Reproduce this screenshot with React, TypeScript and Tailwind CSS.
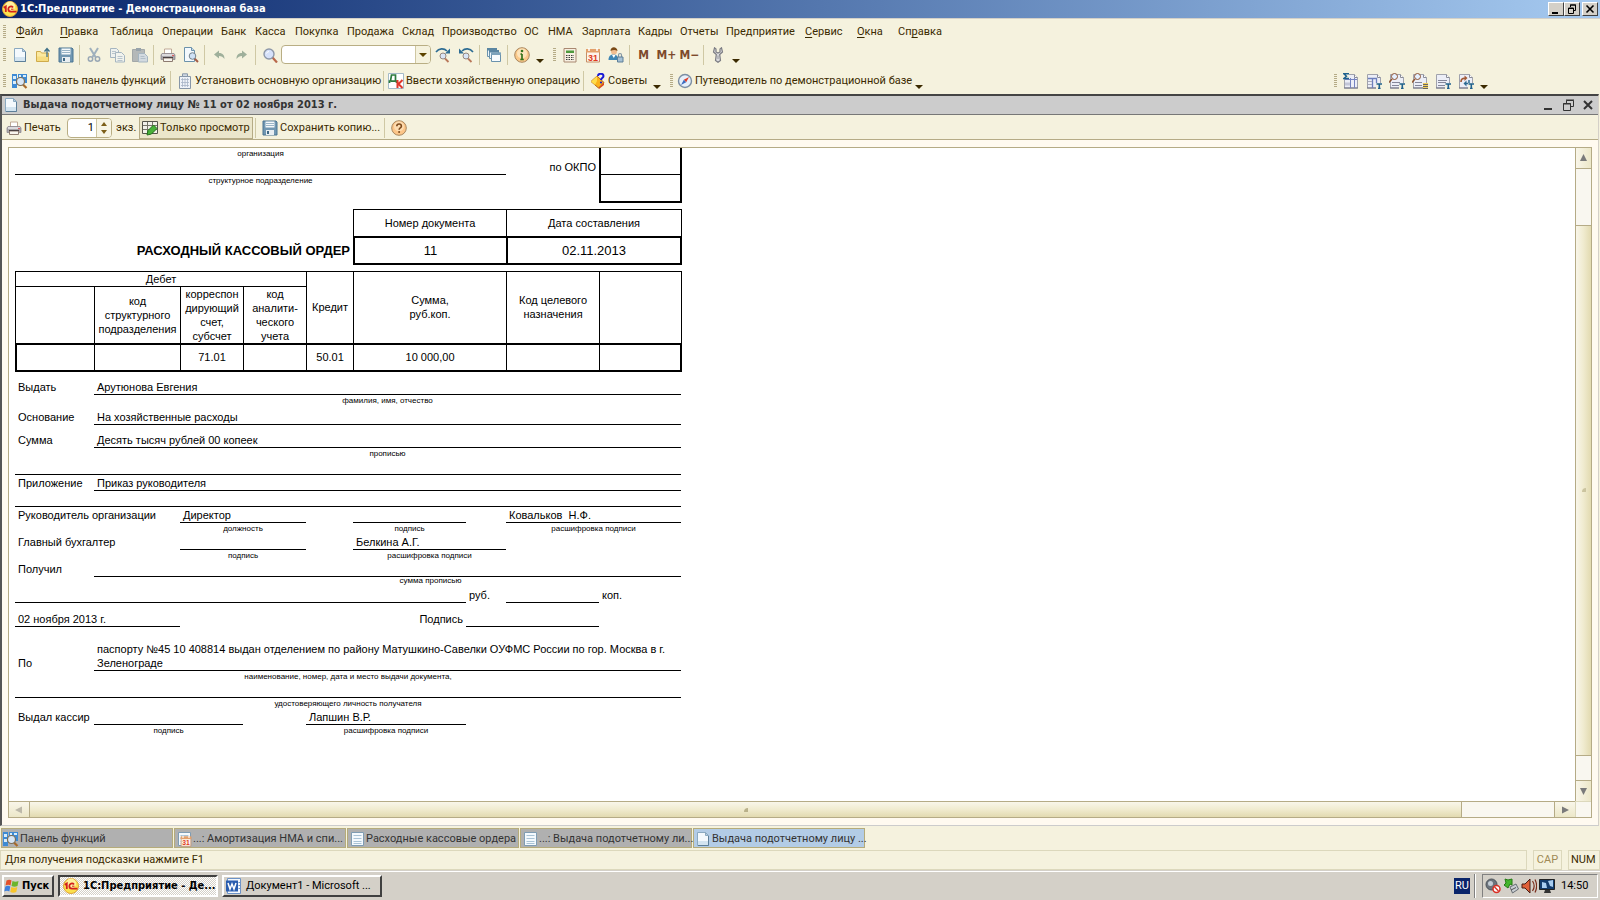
import type { ReactNode } from "react";

const MENU = [
  { pre: "", key: "Ф", post: "айл", width: "w-[44px]" },
  { pre: "", key: "П", post: "равка", width: "w-[50px]" },
  { pre: "Таблица", width: "w-[52px]" },
  { pre: "Операции", width: "w-[59px]" },
  { pre: "Банк", width: "w-[34px]" },
  { pre: "Касса", width: "w-[40px]" },
  { pre: "Покупка", width: "w-[52px]" },
  { pre: "Продажа", width: "w-[55px]" },
  { pre: "Склад", width: "w-[40px]" },
  { pre: "Производство", width: "w-[82px]" },
  { pre: "ОС", width: "w-[24px]" },
  { pre: "НМА", width: "w-[34px]" },
  { pre: "Зарплата", width: "w-[56px]" },
  { pre: "Кадры", width: "w-[42px]" },
  { pre: "Отчеты", width: "w-[46px]" },
  { pre: "Предприятие", width: "w-[79px]" },
  { pre: "", key: "С", post: "ервис", width: "w-[52px]" },
  { pre: "", key: "О", post: "кна", width: "w-[41px]" },
  { pre: "Сп", key: "р", post: "авка", width: "w-[52px]" },
];

function Svg({ children, className = "h-4 w-4" }: { children: ReactNode; className?: string }) {
  return (
    <svg viewBox="0 0 16 16" className={`shrink-0 ${className}`} aria-hidden="true">
      {children}
    </svg>
  );
}

const PageIcon = () => (
  <Svg>
    <path d="M2.5 1.5h8l3 3v10h-11z" fill="#f4f9fd" stroke="#8ba9c0" />
    <path d="M3 10h10v4H3z" fill="#d3e4f0" />
    <path d="M10.5 1.5v3h3z" fill="#b9d0e0" stroke="#8ba9c0" />
    <path d="M13.5 5v9.5H3" fill="none" stroke="#5d7f99" />
  </Svg>
);

const ListIcon = () => (
  <Svg>
    <path d="M2.5 1.5h12v13h-12z" fill="#f4f9fd" stroke="#7f9cb3" />
    <path d="M4.5 4.5h8M4.5 7.5h8M4.5 10.5h8M4.5 12.5h8" stroke="#a9c3d6" />
  </Svg>
);

const OpenIcon = () => (
  <Svg>
    <path d="M1.5 4.5h4l1 1.500h7v8.500h-12z" fill="#fbe9a0" stroke="#cfab4c" />
    <path d="M2 9.500h11V14H2z" fill="#f6dc80" />
    <path d="M12 10V2M9.500 4.500 12 1.500l2.500 3" fill="none" stroke="#3f7088" strokeWidth="1.300" />
  </Svg>
);

const SaveIcon = () => (
  <Svg>
    <path d="M1 1h13l1 1v13H1z" fill="#7197b2" stroke="#4b7592" />
    <path d="M3.500 1.500h9v6h-9z" fill="#f4f8fa" />
    <path d="M4 3.500h8M4 5.500h8" stroke="#9ab5c7" />
    <path d="M4 10h8v5H4z" fill="#e8eef2" />
    <path d="M5 11h2v3H5z" fill="#3f6884" />
  </Svg>
);

const CutIcon = () => (
  <Svg>
    <path d="M4 1l5.500 9M12 1L6.500 10" stroke="#9fb0bd" strokeWidth="2" fill="none" />
    <circle cx="4.500" cy="12" r="2.200" fill="none" stroke="#9aa8b5" strokeWidth="1.500" />
    <circle cx="11.500" cy="12" r="2.200" fill="none" stroke="#9aa8b5" strokeWidth="1.500" />
  </Svg>
);

const CopyIcon = () => (
  <Svg>
    <path d="M1.500 1.500h6l2 2v7h-8z" fill="#eef1ee" stroke="#a5b5c0" />
    <path d="M3 4.500h4M3 6.500h4" stroke="#b8c4cc" />
    <path d="M6.500 5.500h6l3 3v6.500h-9z" fill="#f1f3ee" stroke="#a5b5c0" />
    <path d="M8.500 9.500h5M8.500 11.500h5M8.500 13.500h5" stroke="#b8c4cc" />
  </Svg>
);

const PasteIcon = () => (
  <Svg>
    <path d="M.5 2.500h12v12H.5z" fill="#b4b8b8" stroke="#a3a8a8" />
    <path d="M4 1h5v3H4z" fill="#98a3ab" />
    <path d="M6.500 6.500h6l3 3v5.500h-9z" fill="#d3dae0" stroke="#a5b5c0" />
    <path d="M8.500 9.500h4M8.500 11.500h5" stroke="#b1bec8" />
  </Svg>
);

const PrintIcon = () => (
  <Svg>
    <path d="M4.500 2h7v5h-7z" fill="#fff" stroke="#c0a996" />
    <path d="M2 6.500h12l1 1.500v4.500H1V8z" fill="#aaa7ab" stroke="#85808a" strokeWidth=".7" />
    <path d="M2 7h12v2H2z" fill="#dcdadd" />
    <path d="M3.500 11h9v3.500h-9z" fill="#f7f4ee" stroke="#8d7b70" />
    <path d="M3 10.500h10" stroke="#493f42" />
    <circle cx="13" cy="8.500" r=".8" fill="#d33" />
  </Svg>
);

const PreviewIcon = () => (
  <Svg>
    <path d="M1.500.5h7l3 3v11h-10z" fill="#f4f9fd" stroke="#6c92ab" />
    <path d="M8.500.5v3h3" fill="#c9dcea" stroke="#6c92ab" />
    <path d="M11.500 11.500l3.500 3.500" stroke="#a35c46" strokeWidth="2" />
    <circle cx="9.500" cy="9" r="3.300" fill="#cfe1f5" stroke="#75838c" />
  </Svg>
);

const UndoIcon = () => (
  <Svg>
    <path d="M3 7.500l5-4v2.500c4 0 5.500 2.500 5.500 6-1.500-2-3-3-5.500-3v2.500z" fill="#9fb09b" />
  </Svg>
);

const RedoIcon = () => (
  <Svg>
    <path d="M13 7.500l-5-4v2.500c-4 0-5.500 2.500-5.500 6 1.500-2 3-3 5.500-3v2.500z" fill="#9fb09b" />
  </Svg>
);

const SearchIcon = () => (
  <Svg>
    <path d="M10.500 10.500l4.500 5" stroke="#b9684b" strokeWidth="2.200" />
    <circle cx="7" cy="7" r="5" fill="#d6e1fa" stroke="#8d97a8" strokeWidth="1.400" />
    <path d="M4.500 6.500a3 3 0 0 1 2.500-2" stroke="#fff" fill="none" />
  </Svg>
);

const FindNextIcon = () => (
  <Svg>
    <path d="M1 5c3-4 8-4 11-1" fill="none" stroke="#2d6c93" strokeWidth="1.600" />
    <path d="M15 1.500v5h-5z" fill="#2d6c93" />
    <path d="M10 11.500l3.500 3.500" stroke="#b9785b" strokeWidth="1.800" />
    <circle cx="8" cy="9" r="3" fill="#d9e5f7" stroke="#95877f" />
  </Svg>
);

const FindPrevIcon = () => (
  <Svg>
    <path d="M15 5C12 1 7 1 4 4" fill="none" stroke="#2d6c93" strokeWidth="1.600" />
    <path d="M1 1.500v5h5z" fill="#2d6c93" />
    <path d="M10 11.500l3.500 3.500" stroke="#b9785b" strokeWidth="1.800" />
    <circle cx="8" cy="9" r="3" fill="#d9e5f7" stroke="#95877f" />
  </Svg>
);

const WindowsIcon = () => (
  <Svg>
    <path d="M1.500 1.500h9v8h-9z" fill="#eef6fb" stroke="#6b93ad" />
    <path d="M1 1h10v2.500H1z" fill="#5b86a2" />
    <path d="M3.500 3.500h9v8h-9z" fill="#eef6fb" stroke="#6b93ad" />
    <path d="M3 3h10v2.500H3z" fill="#5b86a2" />
    <path d="M5.500 6h9v8.500h-9z" fill="#f8fcfe" stroke="#6b93ad" />
    <path d="M5 5.500h10V8H5z" fill="#7ca2bb" />
  </Svg>
);

const InfoIcon = () => (
  <Svg>
    <circle cx="8" cy="8" r="7.300" fill="#fbc98a" stroke="#a8875f" />
    <circle cx="8" cy="6.500" r="5" fill="#fde4bb" />
    <path d="M8 7v5.500M6.500 7.200H8M6.300 12.500h3.500" stroke="#35731c" strokeWidth="1.700" fill="none" />
    <circle cx="8" cy="4" r="1.300" fill="#35731c" />
  </Svg>
);

const CalcIcon = () => (
  <Svg>
    <path d="M2 1.500h12v13.500H2z" fill="#f7efe1" stroke="#a98871" />
    <path d="M4 3.500h8v2.500H4z" fill="#4f9a3d" />
    <path d="M4 8.500h8M4 10.500h8M4 12.500h8" stroke="#3c3c3c" strokeWidth="1.200" strokeDasharray="1.500 1" />
  </Svg>
);

const CalendarIcon = ({ className }: { className?: string }) => (
  <Svg className={className}>
    <path d="M1.500 2.500h13v12.500h-13z" fill="#fdf3ea" stroke="#c58e67" />
    <path d="M1 2h14v3.500H1z" fill="#e3a06b" />
    <path d="M4 1v3M12 1v3" stroke="#fff" strokeWidth="1.500" />
    <text x="8" y="13.800" textAnchor="middle" className="fill-[#e03a1c] font-['Liberation_Sans'] text-[9px] font-bold">31</text>
  </Svg>
);

const UserLockIcon = () => (
  <Svg>
    <path d="M.5 13c0-4 2-5.500 5-5.500s4.500 1.500 4.500 5.500z" fill="#3e86b4" />
    <path d="M4 8l1.800 3 1.700-3z" fill="#fff" />
    <circle cx="6" cy="4.500" r="3" fill="#f0bd8f" />
    <path d="M2.500 4c0-5 6.500-5 7 0-2-1.200-4-1.500-7 0z" fill="#7a4a16" />
    <path d="M10.500 10V8c0-2 3-2 3 0v2" fill="none" stroke="#8195a3" strokeWidth="1.200" />
    <path d="M9.500 10h5.500v5H9.500z" fill="#a5c1d6" stroke="#5e7f97" />
  </Svg>
);

const WrenchIcon = () => (
  <Svg>
    <path d="M4.500.8L3.500 5l2.800 2.500-.8 6L8 15.300l2.500-1.800-.8-6L12.500 5l-1-4.200L10 2v3L8 6 6 5V2z" fill="#dcdcdf" stroke="#7c7d83" strokeWidth="1.200" />
    <path d="M8 8.500v3.500" stroke="#a0a1a6" strokeWidth="1.200" />
  </Svg>
);

const PanelIcon = () => (
  <Svg>
    <path d="M0 1h5v14H0zM6 1h9v9H6z" fill="#3d8ad4" />
    <path d="M1 3h3v3H1zM1 8h3v3H1zM7 2h2v2H7zM11 2h3v2h-3z" fill="#d9edfb" />
    <path d="M11 11.500l3.500 3.500" stroke="#a86a2a" strokeWidth="2.200" />
    <circle cx="8.500" cy="8.500" r="4" fill="#d8e7f6" stroke="#7c6b52" strokeWidth="1.200" />
  </Svg>
);

const OrgIcon = () => (
  <Svg>
    <path d="M2.500 3.500h11v12h-11z" fill="#eef2f8" stroke="#8796a8" />
    <path d="M5.500.8h5v2.700h-5z" fill="#cfd8e4" stroke="#8796a8" />
    <path d="M4 6.500h8M4 9.500h8M4 12.500h8M5.500 5v9M8 5v9M10.500 5v9" stroke="#a7b4c6" strokeWidth=".8" />
  </Svg>
);

const DebitCreditIcon = () => (
  <Svg>
    <path d="M.5.5h15v15H.5z" fill="#fff" stroke="#a5bac8" />
    <path d="M1.500 10V8h1l1-6h4v6h1v2M3 8.200h4.500" fill="none" stroke="#2c7a3d" strokeWidth="1.700" />
    <path d="M9.500 7v8M14.500 7l-4 4 4 4" fill="none" stroke="#e0372b" strokeWidth="2" />
  </Svg>
);

const TipsIcon = () => (
  <Svg>
    <path d="M1 8.500L7 3l7 6.500L8.500 15z" fill="#fbb11b" stroke="#b3661a" />
    <path d="M8.500 15L14 9.500V12l-5 4z" fill="#d9461a" />
    <path d="M1 8.500L7 3v5l-2 4z" fill="#ffdc4a" />
    <path d="M8 3c0-3 5.500-3 5.500 0 0 2-2.500 2-2.500 4" fill="none" stroke="#1a1ad6" strokeWidth="2" />
    <circle cx="11" cy="9.500" r="1.100" fill="#1a1ad6" />
  </Svg>
);

const CompassIcon = () => (
  <Svg>
    <circle cx="8" cy="8" r="6.500" fill="#e6effa" stroke="#7c8ea3" strokeWidth="1.400" />
    <path d="M12 4L9.200 9.200 6.800 6.800z" fill="#e0402c" />
    <path d="M4 12l2.800-5.200 2.400 2.400z" fill="#3d6dc0" />
  </Svg>
);

const EditTableIcon = () => (
  <Svg>
    <path d="M.5 1.500h15v12H.5z" fill="#f2f1ea" stroke="#55544c" />
    <path d="M1 5.500h14M1 9.500h14M5.500 2v11M10.500 2v11" stroke="#77756a" />
    <path d="M5 15l1-4.500L11.500 5 15 8.500 9.500 14z" fill="#49b13a" stroke="#23701c" />
  </Svg>
);

const HelpIcon = () => (
  <Svg>
    <circle cx="8" cy="8" r="7.300" fill="#fcc588" stroke="#a8875f" />
    <circle cx="8" cy="6.500" r="5" fill="#fddcb0" />
    <path d="M5.800 6.200c0-3 4.600-3 4.600 0 0 1.700-2.300 1.700-2.300 3.500" fill="none" stroke="#7c4a1c" strokeWidth="1.600" />
    <circle cx="8.100" cy="12" r="1" fill="#7c4a1c" />
  </Svg>
);

function SheetBase() {
  return (
    <>
      <path d="M1.500 1.500h10l3 3v10.500h-13z" fill="#eceef7" stroke="#a0a2ac" />
      <path d="M11.500 1.500v3h3" fill="#fff" stroke="#8a8c97" />
      <path d="M1 15h14" stroke="#6d6f82" />
    </>
  );
}

const TMark = () => (
  <>
    <path d="M10 10h6v6h-6z" fill="#f5f2de" />
    <path d="M10.500 11h5.500M13.300 10.500v5M12 15.500h2.600" stroke="#1f618e" strokeWidth="1.600" fill="none" />
  </>
);

const SumIcon = () => (
  <Svg>
    <SheetBase />
    <path d="M2 9.500h5v3H2z" fill="#c3c6d8" />
    <path d="M2 6.500h12M7.500 5v10M11.500 5v10" stroke="#7583c0" />
    <path d="M0 0h6v6H0z" fill="#f5f2de" />
    <path d="M6 .8H.8L3.500 3.200.8 5.500H6" fill="none" stroke="#1f618e" strokeWidth="1.400" />
  </Svg>
);
const TableTIcon = () => (
  <Svg>
    <SheetBase />
    <path d="M2 5.500h9M6.500 5v10M10.500 5v5" stroke="#6d7fbd" strokeWidth="1.300" />
    <path d="M2 8.500h4M2 11.500h4" stroke="#a9acbc" />
    <TMark />
  </Svg>
);
const LensTIcon = () => (
  <Svg>
    <SheetBase />
    <path d="M3 9.500h8M3 12.500h7" stroke="#85879a" />
    <path d="M3 6L0 9.500" stroke="#8d5333" strokeWidth="1.500" />
    <circle cx="5.500" cy="3.500" r="3" fill="#e4efff" stroke="#8d5333" />
    <TMark />
  </Svg>
);
const LensListIcon = () => (
  <Svg>
    <SheetBase />
    <path d="M3 9.500h7M3 12.500h7" stroke="#85879a" />
    <path d="M3 6L0 9.500" stroke="#8d5333" strokeWidth="1.500" />
    <circle cx="5.500" cy="3.500" r="3" fill="#e4efff" stroke="#8d5333" />
    <path d="M11 10h5v6h-5z" fill="#f3cf58" />
    <path d="M11 11.500h5M11 13.500h5M11 15.500h5" stroke="#666" />
  </Svg>
);
const TextTIcon = () => (
  <Svg>
    <SheetBase />
    <path d="M3 7.500h9M3 9.500h8M3 12.500h7" stroke="#85879a" />
    <TMark />
  </Svg>
);
const ExchangeIcon = () => (
  <Svg>
    <SheetBase />
    <path d="M3 9c0-3 2-4 4-3.500" fill="none" stroke="#a15a36" strokeWidth="1.700" />
    <path d="M6.500 2.500L9.500 5l-3 3z" fill="#a15a36" />
    <path d="M7 10.500h4V7" fill="none" stroke="#2d6b92" strokeWidth="1.500" />
    <path d="M8.500 7.500L5.500 10.500l3 3z" fill="#2d6b92" />
    <TMark />
  </Svg>
);

const OneCIcon = () => (
  <Svg>
    <circle cx="8" cy="8" r="7.500" fill="#fbe14d" stroke="#e0a43a" />
    <circle cx="8" cy="5.500" r="5" fill="#fff2a0" />
    <path d="M1.800 6.800l2-1.300V11M11 6.500C9.500 4.500 6.300 5.500 6.300 8c0 1.800 1.200 2.600 2.700 2.600h5.500" fill="none" stroke="#d3201c" strokeWidth="1.800" />
    <path d="M9 8.200h2.500" stroke="#d3201c" />
  </Svg>
);

const Grip = () => <span className="ml-[3px] mr-0.5 h-3.5 w-[3px] shrink-0 bg-[repeating-linear-gradient(to_bottom,#b5ab86_0_1px,transparent_1px_2px)]" />;
const Sep = () => <span className="mx-0.5 h-5 w-px shrink-0 bg-[#cfc8a4]" />;
const More = () => (
  <button type="button" aria-label="Ещё" className="flex h-5 w-[13px] shrink-0 items-end justify-center pb-0.5">
    <svg viewBox="0 0 8 4" className="h-1 w-2"><path d="M0 0h8L4 4z" fill="#3b2a00" /></svg>
  </button>
);

function ToolButton({ label, children }: { label: string; children: ReactNode }) {
  return (
    <button type="button" aria-label={label} className="flex h-[22px] w-[23px] shrink-0 items-center justify-center font-['DejaVu_Sans_Condensed',sans-serif] text-[12px] font-bold text-[#7d4a2c]">
      {children}
    </button>
  );
}

function TextButton({ icon, children, className = "" }: { icon: ReactNode; children: ReactNode; className?: string }) {
  return (
    <button type="button" className={`flex h-[22px] shrink-0 items-center gap-0.5 whitespace-nowrap ${className}`}>
      {icon}
      {children}
    </button>
  );
}

const CaptionButton = ({ label, children }: { label: string; children: ReactNode }) => (
  <button type="button" aria-label={label} className="flex h-3.5 w-4 items-center justify-center border border-b-[#404040] border-l-white border-r-[#404040] border-t-white bg-[#d4d0c8]">
    {children}
  </button>
);

function TitleBar() {
  return (
    <header className="flex h-[19px] shrink-0 items-center border-b border-[#d4d0c8] bg-linear-to-r from-[#0a246a] to-[#a6caf0] pl-0.5 pr-0.5 text-white">
      <OneCIcon />
      <h1 className="ml-0.5 flex-1 font-['DejaVu_Sans_Condensed',sans-serif] text-[11px] font-bold">1С:Предприятие - Демонстрационная база</h1>
      <CaptionButton label="Свернуть"><svg viewBox="0 0 12 10" className="h-2.5 w-3"><path d="M2 8h6v2H2z" /></svg></CaptionButton>
      <CaptionButton label="Восстановить"><svg viewBox="0 0 12 10" className="h-2.5 w-3" fill="none" stroke="#000"><path d="M4.500 3V1h5v5.500H8M4 1h6M2.500 4h5v5.500h-5zM2 4.500h6" /></svg></CaptionButton>
      <span className="w-0.5" />
      <CaptionButton label="Закрыть"><svg viewBox="0 0 12 10" className="h-2.5 w-3" fill="none" stroke="#000" strokeWidth="1.600"><path d="M2.500 1.500l7 7M9.500 1.500l-7 7" /></svg></CaptionButton>
    </header>
  );
}

function MenuBar() {
  return (
    <nav className="flex h-6 shrink-0 items-center pt-0.5">
      <Grip />
      <div className="flex pl-2">
        {MENU.map((item) => (
          <button type="button" key={item.pre + item.key} className={`shrink-0 whitespace-nowrap text-left ${item.width}`}>
            {item.pre}
            {item.key && <span className="underline underline-offset-2">{item.key}</span>}
            {item.post}
          </button>
        ))}
      </div>
    </nav>
  );
}

function MainToolbar() {
  return (
    <div className="flex h-[23px] shrink-0 items-center">
      <Grip />
      <ToolButton label="Новый"><PageIcon /></ToolButton>
      <ToolButton label="Открыть"><OpenIcon /></ToolButton>
      <ToolButton label="Сохранить"><SaveIcon /></ToolButton>
      <Sep />
      <ToolButton label="Вырезать"><CutIcon /></ToolButton>
      <ToolButton label="Копировать"><CopyIcon /></ToolButton>
      <ToolButton label="Вставить"><PasteIcon /></ToolButton>
      <Sep />
      <ToolButton label="Печать"><PrintIcon /></ToolButton>
      <ToolButton label="Предварительный просмотр"><PreviewIcon /></ToolButton>
      <Sep />
      <ToolButton label="Отменить"><UndoIcon /></ToolButton>
      <ToolButton label="Вернуть"><RedoIcon /></ToolButton>
      <Sep />
      <ToolButton label="Найти"><SearchIcon /></ToolButton>
      <div className="flex h-[19px] w-[150px] shrink-0 overflow-hidden rounded border border-[#b9ae84] bg-white">
        <input type="text" aria-label="Поиск" className="min-w-0 flex-1 px-1 outline-none" />
        <button type="button" aria-label="Список поиска" className="flex w-[15px] items-center justify-center border-l border-[#cfc7a2] bg-[#f5f2de]">
          <svg viewBox="0 0 8 4" className="h-1 w-2"><path d="M0 0h8L4 4z" fill="#5c4300" /></svg>
        </button>
      </div>
      <ToolButton label="Найти следующий"><FindNextIcon /></ToolButton>
      <ToolButton label="Найти предыдущий"><FindPrevIcon /></ToolButton>
      <Sep />
      <ToolButton label="Окна"><WindowsIcon /></ToolButton>
      <Sep />
      <ToolButton label="Справка"><InfoIcon /></ToolButton>
      <More />
      <span className="w-1" />
      <Grip />
      <ToolButton label="Калькулятор"><CalcIcon /></ToolButton>
      <ToolButton label="Календарь"><CalendarIcon /></ToolButton>
      <ToolButton label="Пользователи"><UserLockIcon /></ToolButton>
      <Sep />
      <ToolButton label="M">M</ToolButton>
      <ToolButton label="M+">M+</ToolButton>
      <ToolButton label="M-">M−</ToolButton>
      <Sep />
      <ToolButton label="Сервис"><WrenchIcon /></ToolButton>
      <More />
    </div>
  );
}

function CommandBar() {
  return (
    <div className="flex h-7 shrink-0 items-center pt-px">
      <Grip />
      <TextButton icon={<PanelIcon />} className="w-[160px] pl-1">Показать панель функций</TextButton>
      <Sep />
      <TextButton icon={<OrgIcon />} className="w-[208px] pl-1">Установить основную организацию</TextButton>
      <Sep />
      <TextButton icon={<DebitCreditIcon />} className="w-[195px] pl-0.5">Ввести хозяйственную операцию</TextButton>
      <Sep />
      <TextButton icon={<TipsIcon />} className="w-[64px] pl-1">Советы</TextButton>
      <More />
      <span className="w-1" />
      <Grip />
      <TextButton icon={<CompassIcon />} className="w-[237px] pl-0.5">Путеводитель по демонстрационной базе</TextButton>
      <More />
      <div className="ml-auto mr-[110px] flex items-center">
        <Grip />
        <ToolButton label="Итоги"><SumIcon /></ToolButton>
        <ToolButton label="Таблица"><TableTIcon /></ToolButton>
        <ToolButton label="Поиск в тексте"><LensTIcon /></ToolButton>
        <ToolButton label="Поиск в списке"><LensListIcon /></ToolButton>
        <ToolButton label="Текст"><TextTIcon /></ToolButton>
        <ToolButton label="Обмен"><ExchangeIcon /></ToolButton>
        <More />
      </div>
    </div>
  );
}

function DocumentHeader() {
  return (
    <>
      <div className="flex h-[19px] shrink-0 items-center border-b border-[#777] bg-[#ccc] pl-px text-[#333]">
        <PageIcon />
        <h2 className="ml-1 flex-1 font-['DejaVu_Sans_Condensed',sans-serif] text-[11px] font-bold">Выдача подотчетному лицу № 11 от 02 ноября 2013 г.</h2>
        <div className="flex items-center gap-2 pr-1">
          <button type="button" aria-label="Свернуть окно"><svg viewBox="0 0 12 12" className="h-3 w-3"><path d="M2 9h8v2H2z" fill="#333" /></svg></button>
          <button type="button" aria-label="Восстановить окно"><svg viewBox="0 0 12 12" className="h-3 w-3" fill="none" stroke="#333"><path d="M4.500 4V1.500h7v6H9M4 1h8M1.500 4.500h7v7h-7zM1 5h8" /></svg></button>
          <button type="button" aria-label="Закрыть окно"><svg viewBox="0 0 12 12" className="h-3 w-3" stroke="#333" strokeWidth="2"><path d="M2 2l8 8M10 2l-8 8" /></svg></button>
        </div>
      </div>
      <div className="flex h-[25px] shrink-0 items-center border-b border-[#b5ab86] pl-1 pt-px">
        <TextButton icon={<PrintIcon />} className="w-[61px]">Печать</TextButton>
        <div className="flex h-5 w-[45px] shrink-0 overflow-hidden rounded border border-[#b9ae84] bg-white">
          <input id="copies" type="text" defaultValue="1" className="min-w-0 flex-1 pr-0.5 text-right text-black outline-none" />
          <div className="flex w-[15px] flex-col items-center justify-center gap-1 border-l border-[#cfc7a2] bg-[#f7f5e6]">
            <button type="button" aria-label="Больше"><svg viewBox="0 0 6 4" className="block h-1 w-1.5"><path d="M0 4h6L3 0z" fill="#7c5f1a" /></svg></button>
            <button type="button" aria-label="Меньше"><svg viewBox="0 0 6 4" className="block h-1 w-1.5"><path d="M0 0h6L3 4z" fill="#7c5f1a" /></svg></button>
          </div>
        </div>
        <label htmlFor="copies" className="w-[27px] shrink-0 pl-1">экз.</label>
        <TextButton icon={<EditTableIcon />} className="w-[114px] border border-[#b5ab86] bg-[#ebe6cb] pl-0.5">Только просмотр</TextButton>
        <Sep />
        <TextButton icon={<SaveIcon />} className="w-[124px] pl-1">Сохранить копию...</TextButton>
        <Sep />
        <ToolButton label="Справка по форме"><HelpIcon /></ToolButton>
      </div>
    </>
  );
}

// One line of the printed form; every row shares the same column tracks
function Row({ height, children }: { height: string; children?: ReactNode }) {
  return (
    <div className={`grid grid-cols-[79px_86px_63px_63px_47px_113px_40px_93px_82px] ${height}`}>{children}</div>
  );
}

function Cell({ col, line, children }: { col: string; line?: boolean; children?: ReactNode }) {
  return (
    <div className={`flex items-end whitespace-nowrap border-b pl-[3px] ${line ? "border-black" : "border-transparent"} ${col}`}>
      {children}
    </div>
  );
}

function Caption({ col, children }: { col: string; children: ReactNode }) {
  return <div className={`text-center text-[8px] leading-[12px] whitespace-nowrap ${col}`}>{children}</div>;
}

function CashOrder() {
  return (
    <article className="w-[667px] shrink-0 font-['Liberation_Sans',Arial,sans-serif] text-[11px] leading-[14px] text-black">
      <div className="flex">
        <div className="w-[491px] text-center text-[8px] leading-[12px]">
          <div className="h-[27px] border-b border-black">организация</div>
          <div className="h-7">структурное подразделение</div>
        </div>
        <div className="flex-1 pr-[3px] pt-3 text-right">по ОКПО</div>
        <div className="w-[83px] border-2 border-t-0 border-black">
          <div className="h-[27px] border-b border-black" />
        </div>
      </div>

      <div className="mt-1.5 flex items-end">
        <h3 className="flex h-[29px] flex-1 items-center justify-end pr-[3px] text-[13px] font-bold">РАСХОДНЫЙ КАССОВЫЙ ОРДЕР</h3>
        <table className="w-[329px] table-fixed border-separate border-spacing-0 text-center">
          <colgroup>
            <col className="w-[153px]" />
            <col />
          </colgroup>
          <thead>
            <tr>
              <th className="h-[27px] border-l border-t border-black p-0 font-normal">Номер документа</th>
              <th className="border-l border-r border-t border-black p-0 font-normal">Дата составления</th>
            </tr>
          </thead>
          <tbody className="text-[13px]">
            <tr>
              <td className="h-[29px] border-y-2 border-l-2 border-black p-0">11</td>
              <td className="border-2 border-black p-0">02.11.2013</td>
            </tr>
          </tbody>
        </table>
      </div>

      <table className="mt-1.5 w-full table-fixed border-separate border-spacing-0 text-center">
        <colgroup>
          <col className="w-[79px]" />
          <col className="w-[86px]" />
          <col className="w-[63px]" />
          <col className="w-[63px]" />
          <col className="w-[47px]" />
          <col className="w-[153px]" />
          <col className="w-[93px]" />
          <col />
        </colgroup>
        <thead>
          <tr>
            <th colSpan={4} className="h-[15px] border-l border-t border-black p-0 font-normal">Дебет</th>
            <th rowSpan={2} className="border-l border-t border-black p-0 pb-0.5 font-normal">Кредит</th>
            <th rowSpan={2} className="border-l border-t border-black p-0 pb-0.5 font-normal">Сумма,<br />руб.коп.</th>
            <th rowSpan={2} className="border-l border-t border-black p-0 pb-0.5 font-normal">Код целевого<br />назначения</th>
            <th rowSpan={2} className="border-x border-t border-black p-0" />
          </tr>
          <tr>
            <th className="h-[57px] border-l border-t border-black p-0" />
            <th className="border-l border-t border-black p-0 font-normal">код<br />структурного<br />подразделения</th>
            <th className="border-l border-t border-black p-0 font-normal">корреспон<br />дирующий<br />счет,<br />субсчет</th>
            <th className="border-l border-t border-black p-0 font-normal">код<br />аналити-<br />ческого<br />учета</th>
          </tr>
        </thead>
        <tbody>
          <tr>
            <td className="h-[29px] border-y-2 border-l-2 border-black p-0" />
            <td className="border-y-2 border-l border-black p-0" />
            <td className="border-y-2 border-l border-black p-0 pb-0.5">71.01</td>
            <td className="border-y-2 border-l border-black p-0" />
            <td className="border-y-2 border-l border-black p-0 pb-0.5">50.01</td>
            <td className="border-y-2 border-l border-black p-0 pb-0.5">10 000,00</td>
            <td className="border-y-2 border-l border-black p-0" />
            <td className="border-y-2 border-l border-r-2 border-black p-0" />
          </tr>
        </tbody>
      </table>

      <Row height="h-[23px]">
        <Cell col="col-span-1">Выдать</Cell>
        <Cell col="col-span-8" line>Арутюнова Евгения</Cell>
      </Row>
      <Row height="h-3"><Caption col="col-start-2 col-span-8">фамилия, имя, отчество</Caption></Row>
      <Row height="h-[18px]">
        <Cell col="col-span-1">Основание</Cell>
        <Cell col="col-span-8" line>На хозяйственные расходы</Cell>
      </Row>
      <Row height="h-[23px]">
        <Cell col="col-span-1">Сумма</Cell>
        <Cell col="col-span-8" line>Десять тысяч рублей 00 копеек</Cell>
      </Row>
      <Row height="h-3"><Caption col="col-start-2 col-span-8">прописью</Caption></Row>
      <Row height="h-[15px]"><Cell col="col-span-9" line /></Row>
      <Row height="h-4">
        <Cell col="col-span-1">Приложение</Cell>
        <Cell col="col-span-8" line>Приказ руководителя</Cell>
      </Row>
      <Row height="h-4"><Cell col="col-span-9" line /></Row>
      <Row height="h-4">
        <Cell col="col-span-2">Руководитель организации</Cell>
        <Cell col="col-span-2" line>Директор</Cell>
        <Cell col="col-start-6" line />
        <Cell col="col-start-8 col-span-2" line><span className="whitespace-pre">Ковальков  Н.Ф.</span></Cell>
      </Row>
      <Row height="h-3">
        <Caption col="col-start-3 col-span-2">должность</Caption>
        <Caption col="col-start-6">подпись</Caption>
        <Caption col="col-start-8 col-span-2">расшифровка подписи</Caption>
      </Row>
      <Row height="h-[15px]">
        <Cell col="col-span-2">Главный бухгалтер</Cell>
        <Cell col="col-span-2" line />
        <Cell col="col-start-6 col-span-2" line>Белкина А.Г.</Cell>
      </Row>
      <Row height="h-3">
        <Caption col="col-start-3 col-span-2">подпись</Caption>
        <Caption col="col-start-6 col-span-2">расшифровка подписи</Caption>
      </Row>
      <Row height="h-[13px]">
        <Cell col="col-span-1">Получил</Cell>
        <Cell col="col-span-8" line />
      </Row>
      <Row height="h-[13px]"><Caption col="col-start-3 col-span-7">сумма прописью</Caption></Row>
      <Row height="h-[15px]">
        <Cell col="col-span-6" line />
        <Cell col="col-span-1">руб.</Cell>
        <Cell col="col-span-1" line />
        <Cell col="col-span-1">коп.</Cell>
      </Row>
      <Row height="h-6">
        <Cell col="col-span-2" line>02 ноября 2013 г.</Cell>
        <Cell col="col-start-6 justify-end pr-[3px]">Подпись</Cell>
        <Cell col="col-span-2" line />
      </Row>
      <Row height="h-11">
        <Cell col="col-span-1">По</Cell>
        <Cell col="col-span-8" line>
          <span>паспорту №45 10 408814 выдан отделением по району Матушкино-Савелки ОУФМС России по гор. Москва в г.<br />Зеленограде</span>
        </Cell>
      </Row>
      <Row height="h-3"><Caption col="col-span-9">наименование, номер, дата и место выдачи документа,</Caption></Row>
      <Row height="h-[15px]"><Cell col="col-span-9" line /></Row>
      <Row height="h-3"><Caption col="col-span-9">удостоверяющего личность получателя</Caption></Row>
      <Row height="h-[15px]">
        <Cell col="col-span-1">Выдал кассир</Cell>
        <Cell col="col-span-2" line />
        <Cell col="col-start-5 col-span-2" line>Лапшин В.Р.</Cell>
      </Row>
      <Row height="h-3">
        <Caption col="col-start-2 col-span-2">подпись</Caption>
        <Caption col="col-start-5 col-span-2">расшифровка подписи</Caption>
      </Row>
    </article>
  );
}

const Arrow = ({ d, fill }: { d: string; fill: string }) => (
  <svg viewBox="0 0 8 8" className="h-2 w-2"><path d={d} fill={fill} /></svg>
);

function SheetView() {
  return (
    <div className="min-h-0 flex-1 bg-[#fffaf0] px-1.5 py-[7px]">
      <div className="grid h-full grid-cols-[1fr_16px] grid-rows-[1fr_16px] border border-[#b5ab86]">
        <main className="min-h-0 overflow-hidden bg-white pl-1.5">
          <CashOrder />
        </main>
        <div className="flex flex-col border-l border-[#b5ab86] bg-[#f9f7f0]">
          <button type="button" aria-label="Вверх" className="flex h-[21px] items-center justify-center border-b border-[#b5ab86] bg-linear-to-r from-[#f9f6ea] to-[#ece7c8]">
            <Arrow d="M0 7h7L3.500 0z" fill="#7a7a7a" />
          </button>
          <span className="flex-[56]" />
          <div className="flex flex-[532] items-center justify-center border-y border-[#b5ab86] bg-linear-to-r from-[#f9f6ea] via-[#f0ebcf] to-[#e2dab0]">
            <span className="h-1 w-1 rounded-tl-full bg-[#cbc49f]" />
          </div>
          <span className="flex-[24]" />
          <button type="button" aria-label="Вниз" className="flex h-[21px] items-center justify-center border-t border-[#b5ab86] bg-linear-to-r from-[#f9f6ea] to-[#ece7c8]">
            <Arrow d="M0 1h7L3.500 8z" fill="#7a7a7a" />
          </button>
        </div>
        <div className="flex border-t border-[#b5ab86] bg-[#f9f7f0]">
          <button type="button" aria-label="Влево" className="flex w-[21px] items-center justify-center border-r border-[#b5ab86] bg-linear-to-b from-[#f9f6ea] to-[#ece7c8]">
            <Arrow d="M7 .5v7L0 4z" fill="#bdb9aa" />
          </button>
          <div className="flex flex-[1433] items-center justify-center border-r border-[#b5ab86] bg-linear-to-b from-[#f9f6ea] via-[#f0ebcf] to-[#e2dab0]">
            <span className="h-1 w-1 rounded-tl-full bg-[#b9b18a]" />
          </div>
          <span className="flex-[92]" />
          <button type="button" aria-label="Вправо" className="flex w-[21px] items-center justify-center border-l border-[#b5ab86] bg-linear-to-b from-[#f9f6ea] to-[#ece7c8]">
            <Arrow d="M1 .5v7L8 4z" fill="#7a7a7a" />
          </button>
        </div>
        <div className="border-l border-t border-[#dcd8bc] bg-[#f9f7f0]" />
      </div>
    </div>
  );
}

const AmortIcon = () => (
  <span className="relative h-4 w-4 shrink-0">
    <ListIcon />
    <CalendarIcon className="absolute bottom-0 right-0 h-3 w-3" />
  </span>
);

const TABS = [
  { icon: <PanelIcon />, title: "Панель функций" },
  { icon: <AmortIcon />, title: "...: Амортизация НМА и спи..." },
  { icon: <ListIcon />, title: "Расходные кассовые ордера" },
  { icon: <ListIcon />, title: "...: Выдача подотчетному ли..." },
  { icon: <PageIcon />, title: "Выдача подотчетному лицу ...", active: true },
];

function WindowTabs() {
  return (
    <div className="flex h-[22px] shrink-0 gap-px pl-px">
      {TABS.map((tab) => (
        <button
          type="button"
          key={tab.title}
          className={`flex h-5 w-[172px] items-center whitespace-nowrap border border-[#b5ab7a] pl-px pt-px text-[#333] ${tab.active ? "bg-[#b3cce6]" : "bg-[#b0b0b0]"}`}
        >
          {tab.icon}
          <span className="pl-px">{tab.title}</span>
        </button>
      ))}
    </div>
  );
}

function StatusBar() {
  return (
    <div className="flex h-5 shrink-0 gap-1.5">
      <div className="flex flex-1 items-center border border-[#dcd8bc] pl-1">Для получения подсказки нажмите F1</div>
      <div className="flex w-[29px] items-center justify-center border border-[#dcd8bc] text-[#a08a55]">CAP</div>
      <div className="flex w-8 items-center border border-[#dcd8bc] pl-0.5">NUM</div>
    </div>
  );
}

function Taskbar() {
  return (
    <footer className="flex h-[29px] shrink-0 items-center gap-1 border-t border-white bg-[#d4d0c8] pl-0.5 pr-0.5 text-black">
      <button type="button" className="flex h-[22px] w-[52px] items-center gap-0.5 border-2 border-b-[#404040] border-l-white border-r-[#404040] border-t-white font-['DejaVu_Sans_Condensed',sans-serif] font-bold">
        <Svg>
          <path d="M2.500 2.500c2-1 3.500-1 5 0L6.500 7.500c-1.500-1-3-1-5 0z" fill="#e5502a" />
          <path d="M8.500 3c2 1 4 1 6 0l-1 5c-2 1-4 1-6 0z" fill="#6cb52d" />
          <path d="M1.300 8.500c2-1 3.500-1 5 0l-1 5c-1.500-1-3-1-5 0z" fill="#3f7fdc" />
          <path d="M7.300 9c2 1 4 1 6 0l-1 5c-2 1-4 1-6 0z" fill="#f7c52a" />
        </Svg>
        Пуск
      </button>
      <button type="button" className="flex h-[22px] w-[160px] items-center gap-1 overflow-hidden whitespace-nowrap border-2 border-b-white border-l-[#404040] border-r-white border-t-[#404040] bg-[repeating-conic-gradient(#ffffff_0_25%,#d4d0c8_0_50%)] bg-[length:2px_2px] pl-[3px] font-['DejaVu_Sans_Condensed',sans-serif] font-bold">
        <OneCIcon />
        1С:Предприятие - Де...
      </button>
      <button type="button" className="flex h-[22px] w-[160px] items-center gap-1 overflow-hidden whitespace-nowrap border-2 border-b-[#404040] border-l-white border-r-[#404040] border-t-white pl-0.5">
        <Svg>
          <path d="M1.500.5h13v15h-13z" fill="#f4f8fd" stroke="#6d93c8" />
          <path d="M0 2.500h12v11H0z" fill="#2a5db0" />
          <path d="M2 5l2 6 2-5 2 5 2-6" fill="none" stroke="#fff" strokeWidth="1.500" />
          <path d="M12.500 4.500h1.500M12.500 7.500h1.500M12.500 10.500h1.500" stroke="#6d93c8" />
        </Svg>
        Документ1 - Microsoft ...
      </button>
      <span className="ml-auto flex h-4 w-4 items-center justify-center bg-[#0a246a] text-white">RU</span>
      <span className="h-6 w-0.5 border-l border-r border-l-[#808080] border-r-white" />
      <div className="ml-0.5 flex h-6 w-[116px] items-center gap-0.5 border border-b-white border-l-[#808080] border-r-white border-t-[#808080] pl-0.5">
        <Svg>
          <circle cx="6.500" cy="6.500" r="5.500" fill="#6c747d" stroke="#4b5158" />
          <circle cx="5.500" cy="5.500" r="2.500" fill="#c3ccd5" />
          <circle cx="11.500" cy="11" r="3.500" fill="#fff" stroke="#d93025" strokeWidth="1.500" />
          <path d="M9.500 9l4 4" stroke="#d93025" strokeWidth="1.500" />
        </Svg>
        <Svg>
          <path d="M7 9l6-3 2.500 5-6 4z" fill="#c9ced3" stroke="#666c72" />
          <path d="M8 12l5-2.500" stroke="#555" />
          <path d="M2 1l3 1 4-1v6l-2-1-2 4-4-3 2-2z" fill="#44b52c" stroke="#257a15" />
        </Svg>
        <Svg>
          <path d="M1 6h3l5-5v14l-5-5H1z" fill="#e06038" stroke="#4a1d12" />
          <path d="M11.500 3c2 3 2 7 0 10M14 1.500c2 4 2 9 0 13" fill="none" stroke="#7c2f1c" strokeWidth="1.200" />
        </Svg>
        <Svg>
          <path d="M.5 1.500h15v10H.5z" fill="#123a6b" stroke="#222" />
          <path d="M3 4l4 1 1 5H3zM9 3l5-1v7l-3-1z" fill="#a9cdf0" />
          <path d="M6 12h5l1 3H5z" fill="#333" />
        </Svg>
        <time className="ml-1">14:50</time>
      </div>
    </footer>
  );
}

export default function App() {
  return (
    <div className="flex h-screen min-h-[860px] flex-col overflow-hidden bg-[#f5f2de] font-[Roboto,'DejaVu_Sans_Condensed',sans-serif] text-[11px] leading-[14px] text-[#3b2a00]">
      <TitleBar />
      <MenuBar />
      <MainToolbar />
      <CommandBar />
      <section className="mb-0.5 mr-px flex min-h-0 flex-1 flex-col border-2 border-b border-r border-b-[#ccc] border-l-[#555] border-r-[#d4d0c8] border-t-[#444]">
        <DocumentHeader />
        <SheetView />
      </section>
      <WindowTabs />
      <StatusBar />
      <span className="h-px shrink-0 bg-[#d4d0c8]" />
      <Taskbar />
    </div>
  );
}
